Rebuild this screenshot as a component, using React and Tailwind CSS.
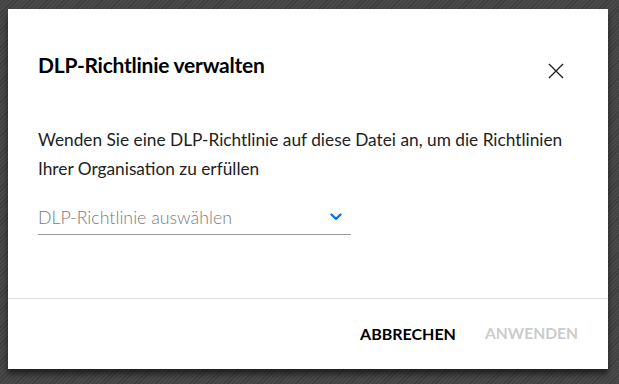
export default function App() {
  return (
    <div className="w-[619px] h-[384px] overflow-hidden relative bg-[#444444] bg-[repeating-linear-gradient(135deg,#3e3e3e_0px,#3e3e3e_1px,#4a4a4a_1px,#4a4a4a_3px)] pl-[8px] pt-[9px]" style={{ fontFamily: "Lato, 'Open Sans', sans-serif" }}>
      <div className="w-[600px] h-[360px] bg-white flex flex-col shadow-[0_5px_6px_rgba(0,0,0,0.55)]">
        <div className="h-[120px] flex flex-col px-[30px]">
          <div className="flex items-start justify-between pt-[43px]">
            <h2 className="text-[21px] font-bold text-black leading-[26px] tracking-[-0.25px]">DLP-Richtlinie verwalten</h2>
            <svg width="18" height="18" viewBox="0 0 18 18" className="mt-[10px] mr-[13px]" fill="none" stroke="#222" strokeWidth="1.4">
              <path d="M2 2 L16 16 M16 2 L2 16" />
            </svg>
          </div>
        </div>
        <div className="px-[30px]">
          <p className="text-[17.3px] leading-[29px] text-[#222] -mt-[4px]">Wenden Sie eine DLP-Richtlinie auf diese Datei an, um die Richtlinien Ihrer Organisation zu erfüllen</p>
          <div className="mt-[17px] w-[313px] h-[35px] border-b border-[#9a9a9a] flex items-center justify-between">
            <span className="text-[17.8px] text-[#7a7a7a] font-light">DLP-Richtlinie auswählen</span>
            <svg width="12" height="8" viewBox="0 0 12 8" className="mr-[9px]" fill="none" stroke="#0a74e8" strokeWidth="2.4" strokeLinecap="round" strokeLinejoin="round">
              <path d="M1.5 1.5 L6 6 L10.5 1.5" />
            </svg>
          </div>
        </div>
        <div className="flex-1" />
        <div className="h-[71px] border-t border-[#e2e2e2] flex items-center justify-end pr-[30px] gap-[29px]">
          <span className="text-[16px] font-bold text-black">ABBRECHEN</span>
          <span className="text-[15.6px] font-bold text-[#cccccc]">ANWENDEN</span>
        </div>
      </div>
    </div>
  );
}
